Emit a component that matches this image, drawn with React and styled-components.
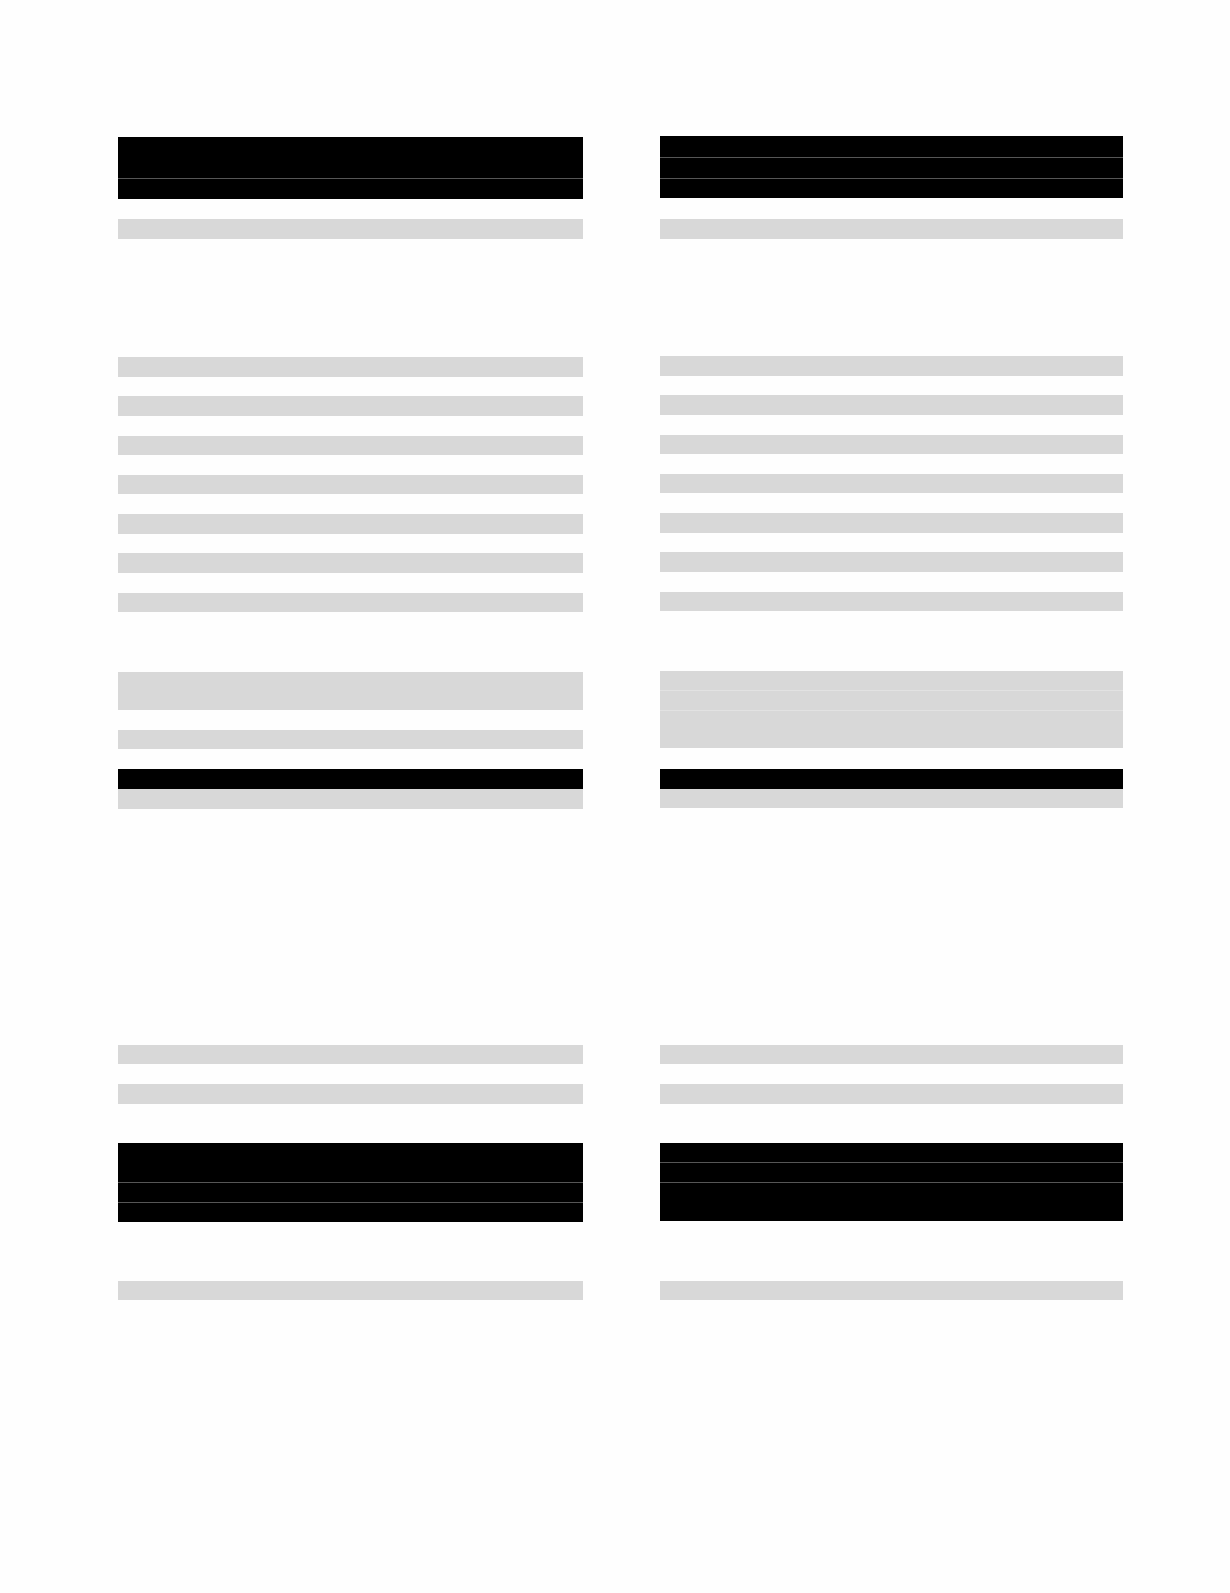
import styled, { createGlobalStyle } from "styled-components";

const GlobalStyle = createGlobalStyle`
    html, body {
        margin: 0;
        padding: 0;
        background: #fefefe;
        font-family: "Liberation Sans", Arial, sans-serif;
    }
`;

const Page = styled.div`
    width: 1230px;
    min-height: 1593px;
    box-sizing: border-box;
    padding: 136px 0 0 118px;
    display: grid;
    grid-template-columns: 465px 463px;
    column-gap: 77px;
    align-items: start;
`;

const Column = styled.div`
    display: flex;
    flex-direction: column;
`;

// a redacted piece of the page: black for headings/tables, grey for body text
const Block = styled.div`
    display: flex;
    flex-direction: column;
    margin-top: ${(p) => p.$gap}px;
    background: ${(p) => (p.$tone === "dark" ? "#000" : "#d8d8d8")};
`;

const Row = styled.div`
    height: ${(p) => p.$h}px;
    box-sizing: border-box;
    border-top: ${(p) => (p.$line ? `1px solid ${p.$line}` : "none")};
`;

const lineColor = { dark: "#565656", light: "#e2e2e2" };

const textLines = (first) =>
    Array.from({ length: 7 }, (_, i) => ({
        tone: "light",
        rows: [19.5],
        gap: i === 0 ? first : 19.8,
    }));

const leftColumn = [
    { tone: "dark", rows: [41, 21], gap: 1 },
    { tone: "light", rows: [20], gap: 20 },
    ...textLines(118),
    { tone: "light", rows: [38.5], gap: 59.5 },
    { tone: "light", rows: [19.5], gap: 19.5 },
    { tone: "dark", rows: [20], gap: 19.5 },
    { tone: "light", rows: [20], gap: 0 },
    { tone: "light", rows: [19.5], gap: 236 },
    { tone: "light", rows: [19.7], gap: 19.8 },
    { tone: "dark", rows: [39, 20, 20], gap: 39 },
    { tone: "light", rows: [19.5], gap: 59 },
];

const rightColumn = [
    { tone: "dark", rows: [21, 21, 20], gap: 0 },
    { tone: "light", rows: [20], gap: 21 },
    ...textLines(117),
    { tone: "light", rows: [19, 20, 38], gap: 60 },
    { tone: "dark", rows: [20], gap: 20.5 },
    { tone: "light", rows: [19.5], gap: 0 },
    { tone: "light", rows: [19.5], gap: 236.5 },
    { tone: "light", rows: [19.5], gap: 19.8 },
    { tone: "dark", rows: [19, 20, 39], gap: 39.5 },
    { tone: "light", rows: [19.5], gap: 59.5 },
];

function RedactedColumn({ blocks }) {
    return (
        <Column>
            {blocks.map((b, i) => (
                <Block key={i} $tone={b.tone} $gap={b.gap}>
                    {b.rows.map((h, j) => (
                        <Row key={j} $h={h} $line={j > 0 ? lineColor[b.tone] : null} />
                    ))}
                </Block>
            ))}
        </Column>
    );
}

export default function App() {
    return (
        <>
            <GlobalStyle />
            <Page>
                <RedactedColumn blocks={leftColumn} />
                <RedactedColumn blocks={rightColumn} />
            </Page>
        </>
    );
}
